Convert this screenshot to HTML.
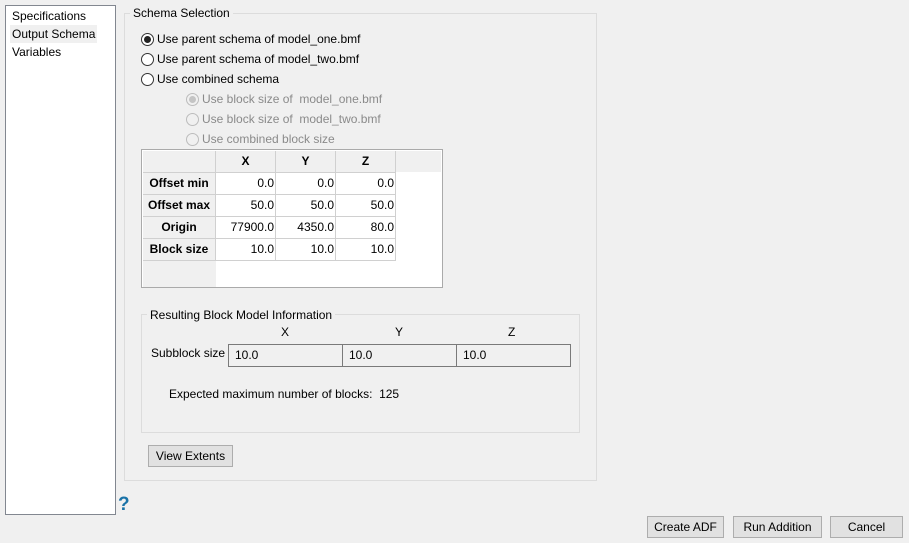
<!DOCTYPE html>
<html><head><meta charset="utf-8"><style>
*{box-sizing:border-box;margin:0;padding:0}
body{width:909px;height:543px;background:#f0f0f0;font-family:"Liberation Sans",sans-serif;font-size:12px;color:#000;position:relative;overflow:hidden}
.a{position:absolute;white-space:nowrap}
.panel{left:5px;top:5px;width:111px;height:510px;background:#fff;border:1px solid #828790}
.grp{border:1px solid #dcdcdc}
.ttl{background:#f0f0f0;padding:0 3px;line-height:14px}
.rad{width:13px;height:13px;border:1px solid #333;border-radius:50%;background:#fff}
.rad.on::after{content:"";position:absolute;left:2px;top:2px;width:7px;height:7px;border-radius:50%;background:#222}
.rad.dis{border-color:#bcbcbc;background:#f0f0f0}
.rad.dis.on::after{background:#c4c4c4}
.lbl{line-height:14px}
.dl{color:#8a8a8a}
.tbl{left:141px;top:149px;width:302px;height:139px;border:1px solid #aaa;background:#fff}
.c{position:absolute;border-right:1px solid #d0d0d0;border-bottom:1px solid #d0d0d0;line-height:21px;font-weight:bold;text-align:center}
.h{background:#f0f0f0}
.v{position:absolute;border-right:1px solid #d0d0d0;border-bottom:1px solid #d0d0d0;line-height:21px;text-align:right;padding-right:1px;background:#fff}
.inp{height:23px;border:1px solid #7a7a7a;background:#f0f0f0;line-height:20px;padding-left:6px}
.btn{border:1px solid #adadad;background:#e1e1e1;text-align:center;line-height:20px}
</style></head><body>
<div class="a panel"></div>
<div class="a" style="left:12px;top:9px;line-height:14px">Specifications</div>
<div class="a" style="left:10px;top:25px;width:87px;height:18px;background:#f0f0f0"></div>
<div class="a" style="left:12px;top:27px;line-height:14px">Output Schema</div>
<div class="a" style="left:12px;top:45px;line-height:14px">Variables</div>

<div class="a grp" style="left:124px;top:13px;width:473px;height:468px"></div>
<div class="a ttl" style="left:130px;top:6px">Schema Selection</div>

<div class="a rad on" style="left:141px;top:33px"></div><div class="a lbl" style="left:157px;top:32px">Use parent schema of model_one.bmf</div>
<div class="a rad" style="left:141px;top:53px"></div><div class="a lbl" style="left:157px;top:52px">Use parent schema of model_two.bmf</div>
<div class="a rad" style="left:141px;top:73px"></div><div class="a lbl" style="left:157px;top:72px">Use combined schema</div>
<div class="a rad dis on" style="left:186px;top:93px"></div><div class="a lbl dl" style="left:202px;top:92px">Use block size of &nbsp;model_one.bmf</div>
<div class="a rad dis" style="left:186px;top:113px"></div><div class="a lbl dl" style="left:202px;top:112px">Use block size of &nbsp;model_two.bmf</div>
<div class="a rad dis" style="left:186px;top:133px"></div><div class="a lbl dl" style="left:202px;top:132px">Use combined block size</div>

<div class="a tbl">
 <div class="h" style="position:absolute;left:1px;top:1px;width:298px;height:21px"></div>
 <div class="c h" style="left:1px;top:1px;width:73px;height:22px"></div>
 <div class="c h" style="left:74px;top:1px;width:60px;height:22px">X</div>
 <div class="c h" style="left:134px;top:1px;width:60px;height:22px">Y</div>
 <div class="c h" style="left:194px;top:1px;width:60px;height:22px">Z</div>
 <div class="c h" style="left:1px;top:23px;width:73px;height:22px">Offset min</div>
 <div class="c h" style="left:1px;top:45px;width:73px;height:22px">Offset max</div>
 <div class="c h" style="left:1px;top:67px;width:73px;height:22px">Origin</div>
 <div class="c h" style="left:1px;top:89px;width:73px;height:22px">Block size</div>
 <div class="h" style="position:absolute;left:1px;top:111px;width:73px;height:26px"></div>
 <div class="v" style="left:74px;top:23px;width:60px;height:22px">0.0</div><div class="v" style="left:134px;top:23px;width:60px;height:22px">0.0</div><div class="v" style="left:194px;top:23px;width:60px;height:22px">0.0</div>
 <div class="v" style="left:74px;top:45px;width:60px;height:22px">50.0</div><div class="v" style="left:134px;top:45px;width:60px;height:22px">50.0</div><div class="v" style="left:194px;top:45px;width:60px;height:22px">50.0</div>
 <div class="v" style="left:74px;top:67px;width:60px;height:22px">77900.0</div><div class="v" style="left:134px;top:67px;width:60px;height:22px">4350.0</div><div class="v" style="left:194px;top:67px;width:60px;height:22px">80.0</div>
 <div class="v" style="left:74px;top:89px;width:60px;height:22px">10.0</div><div class="v" style="left:134px;top:89px;width:60px;height:22px">10.0</div><div class="v" style="left:194px;top:89px;width:60px;height:22px">10.0</div>
</div>

<div class="a grp" style="left:141px;top:314px;width:439px;height:119px"></div>
<div class="a ttl" style="left:147px;top:308px">Resulting Block Model Information</div>
<div class="a lbl" style="left:281px;top:325px">X</div>
<div class="a lbl" style="left:395px;top:325px">Y</div>
<div class="a lbl" style="left:508px;top:325px">Z</div>
<div class="a lbl" style="left:151px;top:346px">Subblock size</div>
<div class="a inp" style="left:228px;top:344px;width:115px">10.0</div>
<div class="a inp" style="left:342px;top:344px;width:115px">10.0</div>
<div class="a inp" style="left:456px;top:344px;width:115px">10.0</div>
<div class="a lbl" style="left:169px;top:387px">Expected maximum number of blocks:&nbsp; 125</div>

<div class="a btn" style="left:148px;top:445px;width:85px;height:22px">View Extents</div>

<div class="a" style="left:118px;top:494px;font-size:19px;font-weight:bold;color:#1a73a8;line-height:22px">?</div>

<div class="a btn" style="left:647px;top:516px;width:77px;height:22px">Create ADF</div>
<div class="a btn" style="left:733px;top:516px;width:89px;height:22px">Run Addition</div>
<div class="a btn" style="left:830px;top:516px;width:73px;height:22px">Cancel</div>
</body></html>
